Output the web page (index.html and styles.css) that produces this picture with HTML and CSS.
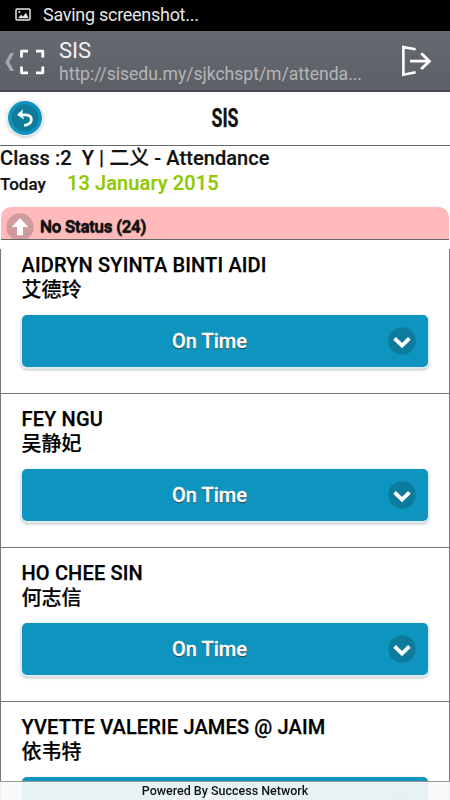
FILE: index.html
```html
<!DOCTYPE html>
<html lang="en">
<head>
    <meta charset="UTF-8">
    <meta name="viewport" content="width=device-width, initial-scale=1">
    <title>SIS</title>
    <link rel="stylesheet" href="styles.css">
</head>
<body>
    <div class="statusBar">
        <svg class="pictureIcon" width="16" height="13" viewBox="0 0 16 13">
            <rect x="1" y="1" width="14" height="11" rx="1.2" fill="none" stroke="#e8e8e8" stroke-width="1.5"/>
            <path d="M3 10.2L6 6.8L8 8.6L11 4.8L13.5 10.2Z" fill="#e8e8e8"/>
            <circle cx="4.4" cy="3.9" r="1" fill="#e8e8e8"/>
        </svg>
        <span class="statusText">Saving screenshot...</span>
    </div>
    <div class="browserBar">
        <svg class="scanIcon" width="40" height="28" viewBox="0 0 40 28">
            <path d="M10.3 5H14L9.4 14L14 23H10.3L5.3 14Z" fill="#a3a6aa"/>
            <path d="M21.5 9.5V3.2H28M36 3.2H42.8V9.5M42.8 18.5V24.8H36M28 24.8H21.5V18.5" fill="none" stroke="#fff" stroke-width="2.8" stroke-linejoin="round"/>
        </svg>
        <div class="pageInfo">
            <div class="pageTitle">SIS</div>
            <div class="pageUrl">http://sisedu.my/sjkchspt/m/attenda...</div>
        </div>
        <svg class="exitIcon" width="32" height="32" viewBox="0 0 32 32">
            <path d="M15.6 4.3L3.4 2.1V29.7L15.6 27.2" fill="none" stroke="#fff" stroke-width="2.6"/>
            <path d="M10 16.2H30M21.2 8.3L29.4 16.2L21.2 24.1" fill="none" stroke="#fff" stroke-width="2.8"/>
        </svg>
    </div>
    <div class="header">
        <div class="backButton">
            <svg width="28" height="28" viewBox="0 0 28 28">
                <circle cx="14" cy="14" r="13.5" fill="#0d7b9c"/>
                <path d="M9.5 10.8H14.5Q20.4 11 20.4 15.6Q20.4 20.8 13 21.3" fill="none" stroke="#fff" stroke-width="2.7"/>
                <path d="M12 5.2L11.2 9.8L13 15.4L6 10.8Z" fill="#fff"/>
            </svg>
        </div>
        <h1>SIS</h1>
    </div>
    <div class="classInfo">
        <div class="className">Class :2&nbsp; Y | 二义 - Attendance</div>
        <div class="dateLine"><span class="today">Today</span><span class="date">13 January 2015</span></div>
    </div>
    <div class="statusHeader">
        <svg class="upIcon" width="28" height="26" viewBox="0 0 28 26">
            <circle cx="14" cy="14" r="13.7" fill="#d19b9e"/>
            <path d="M14 5L22.3 14H17V22.3H11V14H5.7Z" fill="#fff"/>
        </svg>
        <span class="statusLabel">No Status (24)</span>
    </div>
    <div class="students">
        <div class="student">
            <div class="name">AIDRYN SYINTA BINTI AIDI</div>
            <div class="chineseName">艾德玲</div>
            <div class="select"><span>On Time</span>
                <svg class="arrow" width="28" height="28" viewBox="0 0 28 28"><circle cx="14" cy="14" r="13.7" fill="#0d7b9c"/><path d="M6.6 11.4L14 18.6L21.4 11.4" fill="none" stroke="#fff" stroke-width="3.8"/></svg>
            </div>
        </div>
        <div class="student">
            <div class="name">FEY NGU</div>
            <div class="chineseName">吴静妃</div>
            <div class="select"><span>On Time</span>
                <svg class="arrow" width="28" height="28" viewBox="0 0 28 28"><circle cx="14" cy="14" r="13.7" fill="#0d7b9c"/><path d="M6.6 11.4L14 18.6L21.4 11.4" fill="none" stroke="#fff" stroke-width="3.8"/></svg>
            </div>
        </div>
        <div class="student">
            <div class="name">HO CHEE SIN</div>
            <div class="chineseName">何志信</div>
            <div class="select"><span>On Time</span>
                <svg class="arrow" width="28" height="28" viewBox="0 0 28 28"><circle cx="14" cy="14" r="13.7" fill="#0d7b9c"/><path d="M6.6 11.4L14 18.6L21.4 11.4" fill="none" stroke="#fff" stroke-width="3.8"/></svg>
            </div>
        </div>
        <div class="student">
            <div class="name">YVETTE VALERIE JAMES @ JAIM</div>
            <div class="chineseName">依韦特</div>
            <div class="select"><span>On Time</span>
                <svg class="arrow" width="28" height="28" viewBox="0 0 28 28"><circle cx="14" cy="14" r="13.7" fill="#0d7b9c"/><path d="M6.6 11.4L14 18.6L21.4 11.4" fill="none" stroke="#fff" stroke-width="3.8"/></svg>
            </div>
        </div>
    </div>
    <div class="footer">Powered By Success Network</div>
</body>
</html>
```
FILE: styles.css
```css
* {
    box-sizing: border-box;
}
body {
    margin: 0;
    height: 800px;
    overflow: hidden;
    display: flex;
    flex-direction: column;
    background: #fff;
    color: #111;
    font-family: Roboto, "Noto Sans CJK SC", sans-serif;
}
body > div {
    flex-shrink: 0;
}
svg {
    display: block;
    flex-shrink: 0;
}
.statusBar {
    height: 31px;
    background: #000;
    color: #e6e6e6;
    display: flex;
    align-items: center;
    padding: 0 0 2px 15px;
}
.statusText {
    margin-left: 12px;
    font-size: 18px;
    line-height: 24px;
    letter-spacing: -0.28px;
}
.browserBar {
    height: 61px;
    background: linear-gradient(#656970, #5d6167);
    border-bottom: 2px solid #46484d;
    display: flex;
    align-items: center;
}
.scanIcon {
    overflow: visible;
    margin-top: 2px;
}
.pageInfo {
    width: 322px;
    margin: 2px 0 0 19px;
}
.pageTitle {
    color: #f3f3f3;
    font-size: 22px;
    line-height: 25px;
}
.pageUrl {
    color: #b4b6b8;
    font-size: 17.6px;
    line-height: 22px;
    letter-spacing: -0.03px;
    white-space: nowrap;
}
.exitIcon {
    margin-left: 19px;
}
.header {
    height: 54px;
    border-bottom: 1px solid #666;
    position: relative;
    padding-top: 9px;
}
.backButton {
    position: absolute;
    left: 8px;
    top: 9px;
    width: 34px;
    height: 34px;
    border-radius: 50%;
    background: #0e95bf;
    box-shadow: 0 0 0 1px #f2f2f2, 0 1px 4px rgba(0, 0, 0, 0.4);
    display: flex;
    align-items: center;
    justify-content: center;
}
h1 {
    margin: 0;
    font-size: 25px;
    line-height: 36px;
    text-align: center;
    transform: scaleX(0.71); /* Condensed title */
    -webkit-text-stroke: 0.3px #111;
}
.classInfo {
    height: 61px;
    font-weight: 500;
    -webkit-text-stroke: 0.2px;
}
.className {
    font-size: 20px;
    line-height: 24px;
    letter-spacing: 0.07px;
    white-space: nowrap;
}
.dateLine {
    line-height: 26px;
    display: flex;
    align-items: baseline;
}
.today {
    width: 67px;
    font-size: 17px;
}
.date {
    font-size: 20px;
    letter-spacing: 0.1px;
    color: #8fc800;
}
.statusHeader {
    height: 33px;
    margin: 0 1px;
    border-bottom: 1px solid #666;
    border-radius: 10px 10px 0 0;
    background: #ffbabc;
    display: flex;
    padding: 6px 0 0 5px;
}
.statusLabel {
    margin-left: 6px;
    font-size: 17px;
    line-height: 27px;
    font-weight: 500;
    letter-spacing: -0.3px;
    text-shadow: 0 1px 1px #111;
    -webkit-text-stroke: 0.3px;
}
.students {
    flex: 1 1 0;
    min-height: 0;
    overflow: hidden;
    margin-top: 9px;
    border: 1px solid #777;
    border-width: 0 1px;
}
.student {
    height: 154px;
    padding: 4px 21px 0 20.5px;
    border-bottom: 1px solid #777;
    color: #000;
    font-weight: 500;
}
.student:first-child {
    height: 144.5px;
}
.student + .student {
    padding-top: 13px;
}
.name {
    font-size: 20px;
    line-height: 25px;
    letter-spacing: 0.15px;
    white-space: nowrap;
    -webkit-text-stroke: 0.25px;
}
.chineseName {
    font-size: 20px;
    line-height: 25px;
    -webkit-text-stroke: 0.2px;
}
.select {
    height: 52px;
    margin: 12px 0 0 0.5px;
    border-radius: 5px;
    background: #0e95bf;
    box-shadow: 0 1px 0 1px #dceaf1, 0 2px 3px 1px rgba(0, 0, 0, 0.25);
    color: #fff;
    font-size: 20px;
    text-shadow: 0 1px 1px #222;
    -webkit-text-stroke: 0.3px;
    display: flex;
    align-items: center;
    padding-right: 12px;
}
.select span {
    flex: 1;
    padding-left: 9px;
    text-align: center;
}
.footer {
    position: fixed;
    left: 0;
    right: 0;
    bottom: 0;
    height: 19px;
    border-top: 1px solid #999;
    background: rgba(250, 250, 250, 0.92);
    color: #111;
    font-size: 12.5px;
    line-height: 17px;
    font-weight: 500;
    text-align: center;
}
```
